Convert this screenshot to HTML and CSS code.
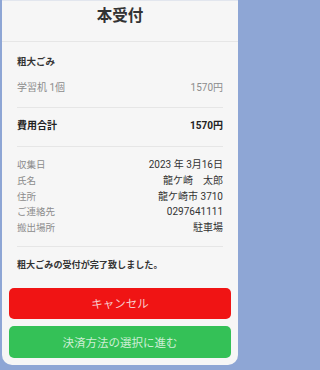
FILE: index.html
```html
<!DOCTYPE html>
<html lang="ja">
<head>
<meta charset="utf-8">
<link rel="stylesheet" href="styles.css">
</head>
<body>
<div class="card">
  <div class="header"><h1 class="title">本受付</h1></div>
  <div class="section s1">
    <div class="cat">粗大ごみ</div>
    <div class="row item"><span>学習机 1個</span><span>1570円</span></div>
  </div>
  <div class="section s2">
    <div class="row total"><span>費用合計</span><span>1570円</span></div>
  </div>
  <div class="section s3">
    <div class="row info"><span class="lbl">収集日</span><span class="val">2023 年 3月16日</span></div>
    <div class="row info"><span class="lbl">氏名</span><span class="val">龍ケ崎　太郎</span></div>
    <div class="row info"><span class="lbl">住所</span><span class="val">龍ケ崎市 3710</span></div>
    <div class="row info"><span class="lbl">ご連絡先</span><span class="val">0297641111</span></div>
    <div class="row info"><span class="lbl">搬出場所</span><span class="val">駐車場</span></div>
  </div>
  <div class="section s4">
    <div class="done">粗大ごみの受付が完了致しました。</div>
  </div>
  <div class="buttons">
    <button class="btn cancel">キャンセル</button>
    <button class="btn pay">決済方法の選択に進む</button>
  </div>
</div>
</body>
</html>
```

FILE: styles.css
```css
html, body {
  margin: 0;
  padding: 0;
}
html {
  background: #8ea6d5;
}
body {
  width: 240px;
  height: 370px;
  overflow: hidden;
  font-family: Roboto, "Noto Sans CJK JP", sans-serif;
}
.card {
  margin: 0 2px;
  height: 365px;
  background: #f6f6f6;
  border-radius: 0 0 10px 10px;
  box-sizing: border-box;
  border-top: 1px solid #e2e6ee;
}
.header {
  height: 41px;
  box-sizing: border-box;
  padding-top: 5px;
  border-bottom: 1px solid #e6e6e6;
  text-align: center;
}
.title {
  margin: 0;
  font-size: 15.5px;
  line-height: 20px;
  font-weight: 700;
  color: #333;
}
.section {
  margin: 0 15px;
  border-bottom: 1px solid #e6e6e6;
}
.s1 { padding: 12px 0 11px; }
.s2 { padding: 10px 0 12px; }
.s3 { padding: 10px 0 10px; }
.s4 { padding: 10px 0 0; border-bottom: none; }
.cat {
  font-size: 9.5px;
  line-height: 16px;
  font-weight: 700;
  color: #333;
  margin-bottom: 10px;
}
.row {
  display: flex;
  justify-content: space-between;
  font-size: 10px;
  line-height: 16px;
}
.item { color: #8c8c8c; }
.total { color: #222; font-weight: 700; }
.info { line-height: 15.75px; }
.lbl { color: #8c8c8c; font-size: 9.5px; }
.val { color: #333; }
.done {
  font-size: 9.1px;
  line-height: 16px;
  font-weight: 700;
  color: #333;
}
.buttons {
  display: flex;
  flex-direction: column;
  gap: 7px;
  padding: 15px 7px 0;
}
.btn {
  border: none;
  border-radius: 5px;
  height: 31px;
  font-family: "Noto Sans CJK JP", sans-serif;
  font-size: 11.5px;
  padding: 0;
}
.cancel {
  background: #f01414;
  color: #f8caca;
}
.pay {
  height: 32px;
  background: #34c157;
  color: #cdeed5;
}
```
